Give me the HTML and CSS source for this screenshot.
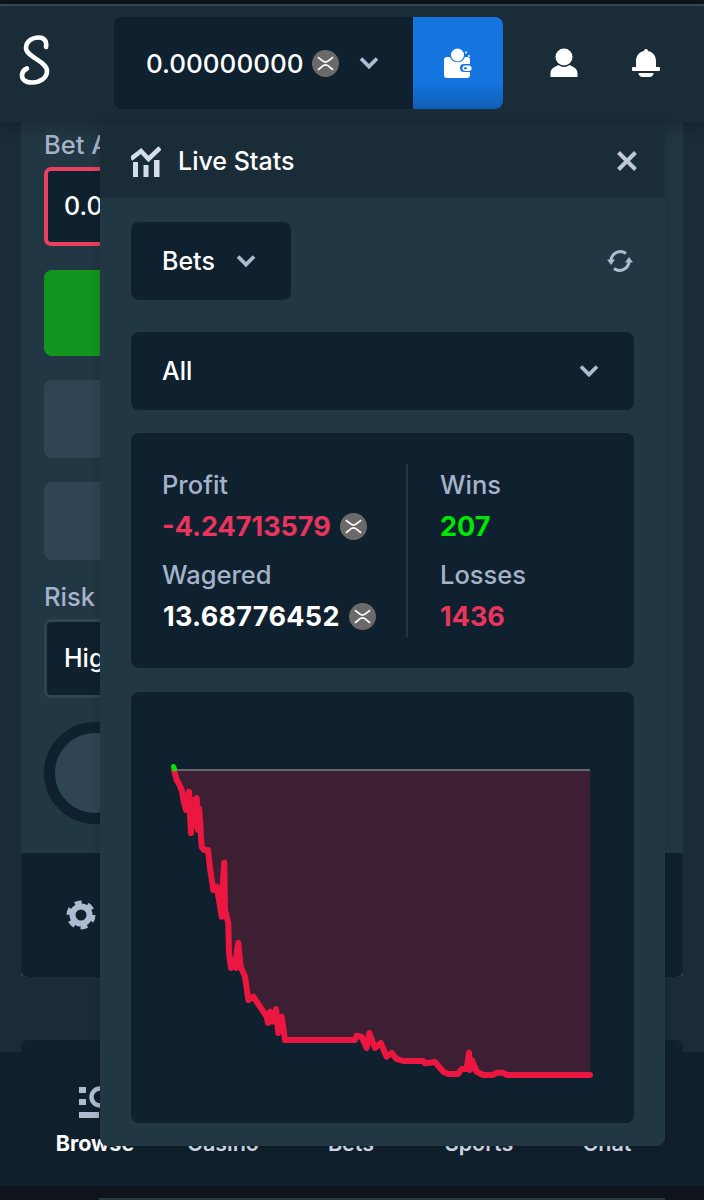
FILE: index.html
```html
<!DOCTYPE html>
<html lang="en">
<head>
  <meta charset="UTF-8">
  <title>Live Stats</title>
  <link rel="stylesheet" href="styles.css">
</head>
<body>

<svg class="sprite" width="0" height="0">
  <symbol id="xrp" viewBox="0 0 28 28">
    <circle cx="14" cy="14" r="14" fill="#6a6a6a"/>
    <path d="M6 7.500c3 1.500 4.500 5 8 5s5-3.500 8-5M6 20.500c3-1.500 4.500-5 8-5s5 3.500 8 5" fill="none" stroke="#fff" stroke-width="1.800"/>
  </symbol>
  <symbol id="chevron" viewBox="0 0 20 14">
    <path d="M2 2.500l8 8 8-8" fill="none" stroke="#b1bad3" stroke-width="3.800"/>
  </symbol>
</svg>

<div class="screen">
  <div class="status-strip"></div>

  <header class="topbar">
    <svg class="logo" viewBox="0 0 32 50">
      <path d="M27 12C28 6 25 2.500 20 2.500C12 2.500 7 7 7 13C7 22 28 26 28 36C28 43 21 47.500 13 47.500C6 47.500 2.500 44 3 39.500C3.500 36.500 5.500 34.500 8 33.500" fill="none" stroke="#fff" stroke-width="4.600" stroke-linecap="round"/>
    </svg>
    <div class="wallet-group">
      <div class="balance">
        <span>0.00000000</span>
        <svg class="coin"><use href="#xrp"/></svg>
        <svg class="chev"><use href="#chevron"/></svg>
      </div>
      <div class="wallet-btn">
        <svg width="30" height="30" viewBox="0 0 30 30">
          <circle cx="14.500" cy="7" r="6.500" fill="#fff"/>
          <path d="M1 12a3 3 0 0 1 3-3h3a8 8 0 0 0 15 0h2a3 3 0 0 1 3 3v4h-6a3.500 3.500 0 0 0 0 8h6v3a3 3 0 0 1-3 3H4a3 3 0 0 1-3-3z" fill="#fff"/>
          <rect x="19.500" y="17.500" width="9" height="5.500" rx="2.500" fill="#fff"/>
          <circle cx="22.500" cy="20.200" r="1.300" fill="#1475e1"/>
          <path d="M23 3.500v2M25 8h2" stroke="#fff" stroke-width="1.500"/>
        </svg>
      </div>
    </div>
    <div class="top-icons">
      <svg width="30" height="30" viewBox="0 0 30 30">
        <circle cx="15" cy="9" r="8.500" fill="#fff"/>
        <path d="M1.500 29v-4c0-5 6-7 8-8 3 2.500 8 2.500 11 0 2 1 8 3 8 8v4z" fill="#fff"/>
      </svg>
      <svg width="30" height="30" viewBox="0 0 30 30">
        <path d="M13 3a2 2 0 0 1 4 0c5 1 8 5 8 10v6H5v-6C5 8 8 4 13 3z" fill="#fff"/>
        <rect x="1" y="19" width="28" height="4" rx="1" fill="#fff"/>
        <path d="M7.500 25h15c0 2.500-2 4-4 4h-7c-2 0-4-1.500-4-4z" fill="#fff"/>
      </svg>
    </div>
  </header>

  <main class="content">
    <section class="game-card">
      <div class="controls">
        <label class="field-label">Bet Amount</label>
        <div class="bet-input">0.00000000</div>
        <div class="bet-btn"></div>
        <div class="half-btn"></div>
        <div class="half-btn"></div>
        <label class="field-label risk-label">Risk</label>
        <div class="risk-select">High</div>
        <div class="ring"></div>
      </div>
      <div class="card-footer">
        <svg width="30" height="30" viewBox="0 0 30 30">
          <circle cx="15" cy="15" r="8.500" fill="none" stroke="#b1bad3" stroke-width="6"/>
          <circle cx="15" cy="15" r="12" fill="none" stroke="#b1bad3" stroke-width="5" stroke-dasharray="6.560 6"/>
        </svg>
      </div>
    </section>
    <div class="next-card"></div>
  </main>

  <nav class="bottom-nav">
    <div class="nav-item active">
      <div class="nav-icon">
        <svg width="40" height="32" viewBox="0 0 40 32">
          <path d="M0 1h7v6H0zM0 13h7v6H0zM0 26h20v6H0z" fill="#b1bad3"/>
          <circle cx="21" cy="11" r="8.500" fill="none" stroke="#b1bad3" stroke-width="4.500"/>
        </svg>
      </div>
      Browse
    </div>
    <div class="nav-item"><div class="nav-icon"></div>Casino</div>
    <div class="nav-item"><div class="nav-icon"></div>Bets</div>
    <div class="nav-item"><div class="nav-icon"></div>Sports</div>
    <div class="nav-item"><div class="nav-icon"></div>Chat</div>
  </nav>

  <div class="home-strip"><div class="home-line"></div></div>

  <aside class="stats-modal">
    <div class="modal-head">
      <svg class="stats-icon" width="30" height="32" viewBox="0 0 30 32">
        <path d="M0 14L10 6l7.500 8L29 3" fill="none" stroke="#d5dceb" stroke-width="4.500"/>
        <path d="M2 17h5v15H2zM12.500 20h5v12h-5zM23 15h5.500v17H23z" fill="#d5dceb"/>
      </svg>
      <span class="modal-title">Live Stats</span>
      <svg class="close" width="22" height="22" viewBox="0 0 22 22">
        <path d="M2.500 2.500l17 17M19.500 2.500l-17 17" stroke="#c0c8dc" stroke-width="4"/>
      </svg>
    </div>
    <div class="modal-body">
      <div class="filter-row">
        <div class="dropdown bets-dd">Bets <svg class="chev"><use href="#chevron"/></svg></div>
        <svg class="refresh" width="28" height="28" viewBox="0 0 28 28">
          <path d="M5 13A9.500 9.500 0 0 1 20 6.500M23 15A9.500 9.500 0 0 1 8 21.500" fill="none" stroke="#b1bad3" stroke-width="3"/>
          <path d="M1 12.500h8L5 18zM19 15.500h8L23 10z" fill="#b1bad3"/>
        </svg>
      </div>
      <div class="dropdown all-dd">All <svg class="chev"><use href="#chevron"/></svg></div>

      <div class="stats-panel">
        <div class="stats-left">
          <div class="stat-label">Profit</div>
          <div class="stat-value loss">-4.24713579 <svg class="coin"><use href="#xrp"/></svg></div>
          <div class="stat-label">Wagered</div>
          <div class="stat-value wagered">13.68776452 <svg class="coin"><use href="#xrp"/></svg></div>
        </div>
        <div class="stats-right">
          <div class="stat-label">Wins</div>
          <div class="stat-value win">207</div>
          <div class="stat-label">Losses</div>
          <div class="stat-value loss">1436</div>
        </div>
      </div>

      <div class="chart-panel">
        <svg class="chart" viewBox="131 692 502 431">
          <polygon class="chart-fill" points="174,770 590,770 590,1075 506.700,1075 503,1072.700 496.700,1072.700 493,1075 483.300,1075 476.700,1071.700 471.700,1060 470,1070 469,1052.700 466.700,1069 461.700,1069 458,1074 448.300,1074 443.300,1071.700 435,1062 425,1063.300 423,1061 403.300,1061 396.700,1059 391.700,1053 386.700,1056.700 380.700,1043 375,1048 369.300,1033 366.700,1048 361.700,1036.700 356.700,1035.700 355,1040 285,1040 281.700,1016.700 278.300,1033 276,1009 272.700,1021.700 270,1011.700 268,1023 266.700,1016.700 253.300,996.700 248.300,1000 245,976.700 240.700,966.700 238.300,943 236,968 231,968 229,953 228.300,923 225,910 224.300,862.700 221.700,916.700 216.700,886.700 213.300,890 208,850 201.700,846.700 201.700,830 196.700,798 191.700,833 189,791.700 186,810 181.700,790 176.700,780"/>
          <line class="chart-zero" x1="174" y1="770" x2="590" y2="770"/>
          <polyline class="chart-line" points="174,770 176.700,780 179,784 181.700,790 184,803 186,810 187.500,798 189,791.700 190,815 191,833 192.500,800 193,826 194.500,810 196.700,798 198,830 199,808 200.500,826 201,838 201.700,846.700 204,850 208,850 210,868 213.300,890 216.700,886.700 219,900 221.700,916.700 223,880 224.300,862.700 224.700,890 225,910 228.300,923 229,953 231,968 233,960 236,968 237,950 238.300,943 240.700,966.700 245,976.700 248.300,1000 253.300,996.700 266.700,1016.700 268,1023 270,1011.700 272.700,1021.700 276,1009 278.300,1033 281.700,1016.700 285,1040 355,1040 356.700,1035.700 361.700,1036.700 366.700,1048 369.300,1033 375,1048 380.700,1043 386.700,1056.700 391.700,1053 396.700,1059 403.300,1061 423,1061 425,1063.300 435,1062 443.300,1071.700 448.300,1074 458,1074 461.700,1069 466.700,1069 469,1052.700 470,1070 471.700,1060 476.700,1071.700 483.300,1075 493,1075 496.700,1072.700 503,1072.700 506.700,1075 590,1075"/>
          <polyline class="chart-start" points="173.500,766.500 174.500,769"/>
        </svg>
      </div>
    </div>
  </aside>
</div>

</body>
</html>
```

FILE: styles.css
```css
* {
  box-sizing: border-box;
}

body {
  margin: 0;
  background: #0e131c;
  font-family: Inter, "Noto Sans", sans-serif;
  color: #fff;
}

.sprite {
  position: absolute;
}

.screen {
  position: relative;
  width: 704px;
  height: 1200px;
  overflow: hidden;
  display: flex;
  flex-direction: column;
  background: #1a2c38;
}

.status-strip {
  height: 6px;
  flex: none;
  background: #0e131c;
  border-bottom: 2px solid #3b4852;
}

/* Header */
.topbar {
  position: relative;
  z-index: 1;
  height: 116px;
  flex: none;
  display: flex;
  align-items: flex-start;
  background: #1a2c38;
  box-shadow: 0 6px 14px rgba(0,0,0,0.2);
}

.logo {
  width: 32px;
  height: 50px;
  margin: 29px 0 0 19px;
}

.wallet-group {
  display: flex;
  width: 389px;
  height: 92px;
  margin: 11px 0 0 63px;
  border-radius: 8px;
  overflow: hidden;
  background: #0f212e;
}

.balance {
  flex: 1;
  display: flex;
  align-items: center;
  padding-left: 32px;
  font-size: 26px;
  font-weight: 500;
}

.balance .coin {
  margin-left: 8px;
}

.balance .chev {
  margin-left: 20px;
}

.coin {
  width: 27px;
  height: 27px;
  flex: none;
}

.chev {
  width: 20px;
  height: 14px;
  flex: none;
}

.wallet-btn {
  width: 90px;
  display: flex;
  align-items: center;
  justify-content: center;
  background: linear-gradient(#1475e1 70%, #105eb4);
}

.top-icons {
  display: flex;
  gap: 52px;
  margin: 42px 0 0 46px;
}

/* Page behind the modal */
.content {
  flex: 1;
  min-height: 0;
  padding: 0 21px;
}

.game-card {
  height: 855px;
  display: flex;
  flex-direction: column;
  background: #213743;
}

.controls {
  flex: 1;
  padding: 8px 23px 0;
}

.field-label {
  display: block;
  height: 37px;
  font-size: 25.500px;
  font-weight: 500;
  line-height: 30px;
  color: #a6b1ca;
}

.bet-input,
.risk-select {
  height: 79px;
  padding-left: 17px;
  border-radius: 7px;
  background: #0f212e;
  border: 3px solid #2f4553;
  font-size: 25px;
  font-weight: 500;
  line-height: 73px;
}

.bet-input {
  border: 4px solid #e9415f;
  padding-left: 16px;
  line-height: 71px;
}

.bet-btn {
  height: 86px;
  margin-top: 24px;
  border-radius: 8px;
  background: #12951f;
}

.half-btn {
  height: 78px;
  margin-top: 24px;
  border-radius: 8px;
  background: #2f4553;
}

.risk-label {
  height: 35px;
  margin-top: 22px;
}

.risk-select {
  margin-top: 2px;
}

.ring {
  width: 102px;
  height: 102px;
  margin-top: 24px;
  border-radius: 50%;
  background: #2f4553;
  border: 11px solid #0f212e;
}

.card-footer {
  height: 124px;
  flex: none;
  display: flex;
  align-items: center;
  padding-left: 45px;
  border-radius: 0 0 8px 8px;
  background: #0f212e;
}

.next-card {
  height: 12px;
  margin-top: 63px;
  border-radius: 8px 8px 0 0;
  background: #0f212e;
}

/* Bottom nav */
.bottom-nav {
  position: relative;
  height: 134px;
  flex: none;
  display: grid;
  grid-template-columns: repeat(5, 128px);
  padding: 34px 31px 0;
  background: #0f1f2b;
}

.nav-item {
  display: flex;
  flex-direction: column;
  align-items: center;
  font-size: 21.500px;
  font-weight: 600;
  color: #d5dceb;
}

.nav-item.active {
  color: #fff;
  font-weight: 700;
}

.nav-icon {
  width: 32px;
  height: 44px;
}

.home-strip {
  height: 14px;
  flex: none;
  position: relative;
  z-index: 1;
  padding: 12px 39px 0 99px;
  background: #0e131c;
}

.home-line {
  height: 2px;
  background: #2a3944;
}

/* Live stats modal */
.stats-modal {
  position: absolute;
  z-index: 2;
  top: 124px;
  left: 100px;
  width: 565px;
  height: 1022px;
  display: flex;
  flex-direction: column;
  border-radius: 0 0 8px 8px;
  background: #213743;
  box-shadow: 0 0 10px rgba(0,0,0,0.18);
}

.modal-head {
  height: 74px;
  flex: none;
  display: flex;
  align-items: center;
  padding: 0 27px 0 31px;
  background: #1a2c38;
}

.modal-title {
  flex: 1;
  margin-left: 17px;
  font-size: 25px;
  font-weight: 500;
}

.modal-body {
  flex: 1;
  padding: 24px 31px;
  display: flex;
  flex-direction: column;
}

.filter-row {
  display: flex;
  align-items: center;
  justify-content: space-between;
}

.dropdown {
  height: 78px;
  display: flex;
  align-items: center;
  justify-content: space-between;
  border-radius: 8px;
  background: #0f212e;
  font-size: 25px;
  font-weight: 500;
}

.bets-dd {
  width: 160px;
  padding: 0 35px 0 31px;
}

.all-dd {
  margin-top: 32px;
  padding: 0 35px 0 31px;
}

.stats-panel {
  height: 235px;
  margin-top: 23px;
  padding: 31px;
  display: flex;
  border-radius: 8px;
  background: #0f212e;
}

.stats-left {
  width: 246px;
  padding-right: 20px;
  border-right: 2px solid #213743;
}

.stats-right {
  padding-left: 32px;
}

.stat-label {
  height: 40px;
  font-size: 25.500px;
  font-weight: 500;
  line-height: 42px;
  color: #a6b1ca;
}

.stat-value {
  height: 44px;
  margin-bottom: 6px;
  display: flex;
  align-items: center;
  gap: 9px;
  font-size: 27px;
  font-weight: 700;
  white-space: nowrap;
}

.wagered {
  padding-left: 1px;
  letter-spacing: 0.3px;
}

.loss {
  color: #e9345e;
}

.win {
  color: #00e701;
}

.chart-panel {
  height: 431px;
  margin-top: 24px;
  border-radius: 8px;
  background: #0f212e;
}

.chart {
  display: block;
  width: 502px;
  height: 431px;
}

.chart-fill {
  fill: #3d1f33;
}

.chart-zero {
  stroke: #66666e;
  stroke-width: 2;
}

.chart-line {
  fill: none;
  stroke: #ec1741;
  stroke-width: 6;
  stroke-linejoin: round;
  stroke-linecap: round;
}

.chart-start {
  fill: none;
  stroke: #00e701;
  stroke-width: 5;
  stroke-linecap: round;
}
```
